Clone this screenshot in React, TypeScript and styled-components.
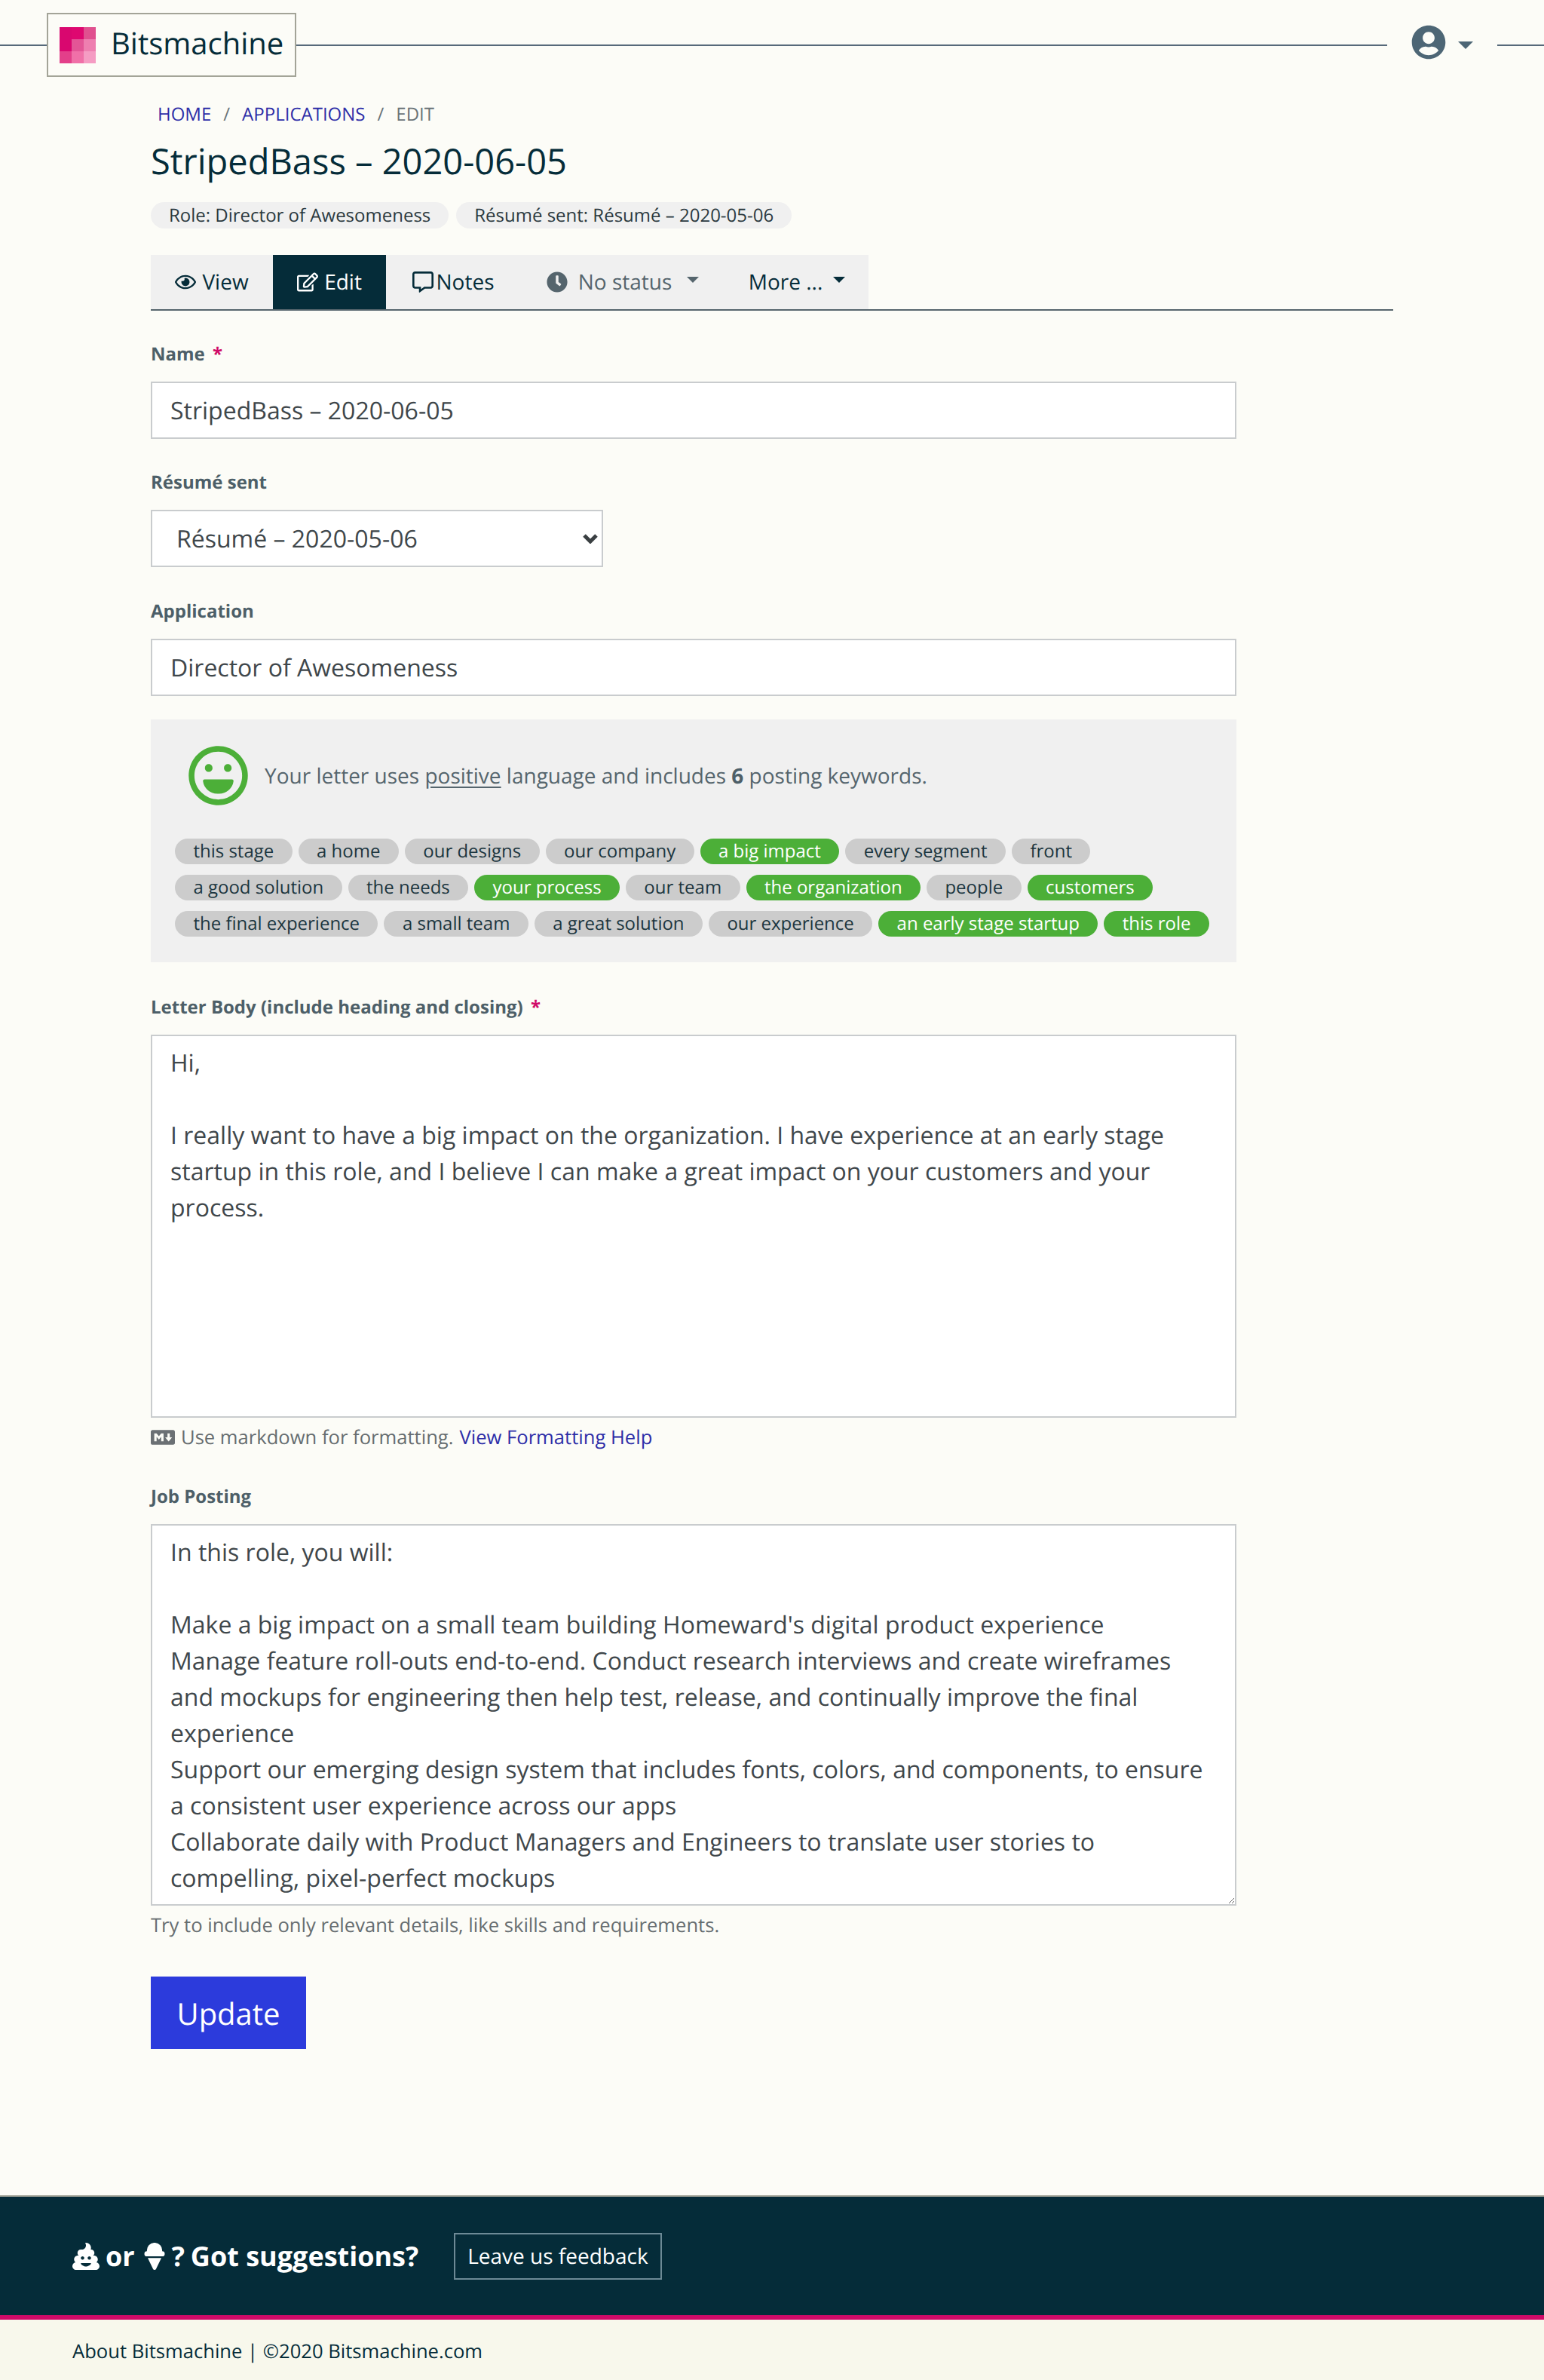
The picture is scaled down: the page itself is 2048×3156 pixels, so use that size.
import React from 'react';
import styled, { createGlobalStyle } from 'styled-components';
import { FaRegEye, FaRegEdit, FaRegCommentAlt, FaClock, FaUserCircle, FaPoo, FaIceCream, FaMarkdown, FaRegLaugh } from 'react-icons/fa';

const GlobalStyle = createGlobalStyle`
  html, body { margin: 0; padding: 0; background: #fcfcf7; }
  body { font-family: "Open Sans", "Noto Sans", sans-serif; color: #052c39; }
  * { box-sizing: border-box; text-rendering: geometricPrecision; }
`;

const Page = styled.div`
  display: flex;
  flex-direction: column;
  width: 2048px;
  height: 3156px;
`;

const Header = styled.header`
  display: flex;
  align-items: center;
  height: 119px;
`;

const Rule = styled.div<{ $w?: number }>`
  height: 2px;
  background: #56697a;
  flex: ${p => (p.$w ? `0 0 ${p.$w}px` : '1')};
`;

const LogoBox = styled.a`
  display: flex;
  align-items: center;
  gap: 20px;
  width: 331px;
  height: 85px;
  padding-left: 15px;
  border: 2px solid #a3a498;
  font-size: 40px;
  color: #052c39;
  span { margin-top: -6px; }
`;

const UserMenu = styled.div`
  display: flex;
  align-items: center;
  gap: 16px;
  width: 146px;
  padding-left: 32px;
  color: #4d6675;
  svg { width: 46px; height: 46px; margin-top: -8px; }
`;

const Caret = styled.span<{ $size?: number }>`
  display: inline-block;
  width: 0;
  height: 0;
  border-left: ${p => p.$size || 8}px solid transparent;
  border-right: ${p => p.$size || 8}px solid transparent;
  border-top: ${p => p.$size || 8}px solid currentColor;
`;

const Main = styled.main`
  flex: 1;
  width: 1648px;
  margin-left: 200px;
`;

const Crumbs = styled.nav`
  display: flex;
  gap: 16px;
  padding-left: 9px;
  margin-top: 17px;
  font-size: 24px;
  line-height: 32px;
  text-transform: uppercase;
  color: #6b7478;
`;

const Crumb = styled.a`
  color: #2e2ea8;
`;

const Title = styled.h1`
  margin: 13px 0 0;
  font-size: 47px;
  font-weight: 400;
  line-height: 64px;
  color: #052c39;
`;

const Tags = styled.div`
  display: flex;
  gap: 10px;
  margin-top: 23px;
`;

const Tag = styled.span`
  padding: 0 24px;
  height: 35px;
  line-height: 35px;
  border-radius: 18px;
  background: #f0f0f0;
  font-size: 24px;
  color: #2c3a40;
`;

const Tabs = styled.div`
  display: flex;
  margin-top: 35px;
  border-bottom: 2px solid #56656d;
`;

const TabBar = styled.div`
  display: flex;
  background: #f0f0f0;
`;

const Tab = styled.a<{ $active?: boolean; $muted?: boolean; $w: number; $gap?: number }>`
  display: flex;
  align-items: center;
  justify-content: center;
  gap: ${p => p.$gap || 8}px;
  width: ${p => p.$w}px;
  height: 72px;
  font-size: 28px;
  background: ${p => (p.$active ? '#052c39' : 'transparent')};
  color: ${p => (p.$active ? '#fff' : p.$muted ? '#55656d' : '#052c39')};
  svg { width: 28px; height: 28px; }
  ${Caret} { margin: 0 0 6px 6px; }
`;

const Form = styled.form`
  width: 1440px;
`;

const Field = styled.div<{ $top: number }>`
  margin-top: ${p => p.$top}px;
`;

const Label = styled.label`
  display: block;
  font-size: 24px;
  font-weight: 700;
  line-height: 36px;
  margin-bottom: 18px;
  color: #4d5f68;
  i { font-style: normal; color: #d00a68; margin-left: 4px; }
`;

const Input = styled.input`
  display: block;
  width: 100%;
  height: 76px;
  padding: 0 24px;
  border: 2px solid #c9ccce;
  background: #fff;
  font: 400 32px "Open Sans", sans-serif;
  color: #3f474b;
  border-radius: 0;
  outline: none;
`;

const SelectWrap = styled.div`
  position: relative;
  width: 600px;
  svg { position: absolute; right: 7px; top: 31px; pointer-events: none; }
`;

const Select = styled.select`
  display: block;
  width: 100%;
  height: 76px;
  padding: 0 32px;
  border: 2px solid #c9ccce;
  background: #fff;
  font: 400 32px "Open Sans", sans-serif;
  color: #3f474b;
  border-radius: 0;
  outline: none;
  appearance: none;
`;

const Sentiment = styled.section`
  margin-top: 31px;
  height: 322px;
  padding: 34px 32px 0;
  background: #f0f0f0;
`;

const SentimentRow = styled.div`
  display: flex;
  align-items: center;
  gap: 21px;
  padding-left: 17px;
  height: 81px;
  font-size: 28px;
  color: #55656d;
  svg { width: 81px; height: 81px; color: #4caf38; }
  u { text-underline-offset: 4px; }
  b { color: #4d5f68; }
`;

const Keywords = styled.div`
  display: flex;
  flex-direction: column;
  gap: 14px;
  margin-top: 43px;
`;

const KeywordRow = styled.div`
  display: flex;
  gap: 8px;
`;

const Keyword = styled.span<{ $on?: boolean }>`
  height: 34px;
  line-height: 34px;
  padding: 0 24.4px;
  border-radius: 17px;
  font-size: 24px;
  white-space: nowrap;
  background: ${p => (p.$on ? '#4caf38' : '#cccccc')};
  color: ${p => (p.$on ? '#fff' : '#1c3640')};
`;

const TextArea = styled.textarea<{ $resize?: boolean }>`
  display: block;
  width: 100%;
  height: ${p => (p.$resize ? 506 : 508)}px;
  padding: 12px 24px;
  border: 2px solid #c9ccce;
  background: #fff;
  font: 400 32px/48px "Open Sans", sans-serif;
  color: #3f474b;
  border-radius: 0;
  outline: none;
  overflow: hidden;
  resize: ${p => (p.$resize ? 'vertical' : 'none')};
`;

const Help = styled.p`
  display: flex;
  align-items: center;
  gap: 8px;
  margin: 8px 0 0;
  font-size: 25.6px;
  line-height: 36px;
  color: #666d70;
  svg { width: 32px; height: 32px; color: #6b7074; }
  a { color: #2e2ea8; }
`;

const Submit = styled.button`
  display: block;
  width: 206px;
  height: 96px;
  margin-top: 50px;
  border: 0;
  border-radius: 0;
  background: #2c3bdc;
  color: #fff;
  font: 400 40px "Open Sans", sans-serif;
`;

const FeedbackBar = styled.section`
  display: flex;
  align-items: center;
  gap: 47px;
  height: 159px;
  padding-left: 96px;
  background: #052c39;
  border-top: 2px solid #a3a498;
  color: #fff;
`;

const FeedbackLead = styled.div`
  display: flex;
  align-items: center;
  gap: 8px;
  font-size: 36px;
  font-weight: 700;
  svg { width: 36px; height: 36px; }
`;

const Cone = styled(FaIceCream)`
  margin-right: -3px;
`;

const FeedbackButton = styled.a`
  padding: 0 16px;
  height: 62px;
  line-height: 58px;
  border: 2px solid #6d8a96;
  font-size: 28px;
  color: #fff;
`;

const Footer = styled.footer`
  height: 86px;
  padding: 24px 0 0 96px;
  border-top: 6px solid #d00a68;
  background: #f8f8ec;
  font-size: 25.6px;
  line-height: 36px;
  color: #052c39;
`;

const Logo = () => (
  <svg width="48" height="48" viewBox="0 0 3 3" shapeRendering="crispEdges">
    <rect x="0" y="0" width="1" height="1" fill="#d9076f" />
    <rect x="1" y="0" width="1" height="1" fill="#de0870" />
    <rect x="2" y="0" width="1" height="1" fill="#e0508f" />
    <rect x="0" y="1" width="1" height="1" fill="#d9076f" />
    <rect x="1" y="1" width="1" height="1" fill="#e35596" />
    <rect x="2" y="1" width="1" height="1" fill="#ee7fb0" />
    <rect x="0" y="2" width="1" height="1" fill="#e33f8a" />
    <rect x="1" y="2" width="1" height="1" fill="#f070a8" />
    <rect x="2" y="2" width="1" height="1" fill="#f59cc3" />
  </svg>
);

const Chevron = () => (
  <svg width="20" height="14" viewBox="0 0 20 14" fill="none" stroke="#3a3f42" strokeWidth="5">
    <path d="M2 3l8 8 8-8" />
  </svg>
);

const keywordRows: [string, boolean][][] = [
  [['this stage', false], ['a home', false], ['our designs', false], ['our company', false], ['a big impact', true], ['every segment', false], ['front', false]],
  [['a good solution', false], ['the needs', false], ['your process', true], ['our team', false], ['the organization', true], ['people', false], ['customers', true]],
  [['the final experience', false], ['a small team', false], ['a great solution', false], ['our experience', false], ['an early stage startup', true], ['this role', true]],
];

const letterBody = `Hi,

I really want to have a big impact on the organization. I have experience at an early stage startup in this role, and I believe I can make a great impact on your customers and your process.`;

const jobPosting = `In this role, you will:

Make a big impact on a small team building Homeward's digital product experience
Manage feature roll-outs end-to-end. Conduct research interviews and create wireframes and mockups for engineering then help test, release, and continually improve the final experience
Support our emerging design system that includes fonts, colors, and components, to ensure a consistent user experience across our apps
Collaborate daily with Product Managers and Engineers to translate user stories to compelling, pixel-perfect mockups
Work with other designers to build and refine the look and feel of all our products and`;

export default function App() {
  return (
    <Page>
      <GlobalStyle />
      <Header>
        <Rule $w={62} />
        <LogoBox>
          <Logo />
          <span>Bitsmachine</span>
        </LogoBox>
        <Rule />
        <UserMenu>
          <FaUserCircle />
          <Caret $size={10} />
        </UserMenu>
        <Rule $w={62} />
      </Header>
      <Main>
        <Crumbs>
          <Crumb>Home</Crumb>
          <span>/</span>
          <Crumb>Applications</Crumb>
          <span>/</span>
          <span>Edit</span>
        </Crumbs>
        <Title>StripedBass – 2020-06-05</Title>
        <Tags>
          <Tag>Role: Director of Awesomeness</Tag>
          <Tag>Résumé sent: Résumé – 2020-05-06</Tag>
        </Tags>
        <Tabs>
          <TabBar>
            <Tab $w={162}><FaRegEye /> View</Tab>
            <Tab $w={150} $active><FaRegEdit /> Edit</Tab>
            <Tab $w={178} $gap={4}><FaRegCommentAlt /> Notes</Tab>
            <Tab $w={272} $muted $gap={14}><FaClock /> No status <Caret /></Tab>
            <Tab $w={190}>More ... <Caret /></Tab>
          </TabBar>
        </Tabs>
        <Form>
          <Field $top={40}>
            <Label>Name <i>*</i></Label>
            <Input defaultValue="StripedBass – 2020-06-05" />
          </Field>
          <Field $top={40}>
            <Label>Résumé sent</Label>
            <SelectWrap>
              <Select defaultValue="r">
                <option value="r">Résumé – 2020-05-06</option>
              </Select>
              <Chevron />
            </SelectWrap>
          </Field>
          <Field $top={41}>
            <Label>Application</Label>
            <Input defaultValue="Director of Awesomeness" />
          </Field>
          <Sentiment>
            <SentimentRow>
              <FaRegLaugh />
              <span>Your letter uses <u>positive</u> language and includes <b>6</b> posting keywords.</span>
            </SentimentRow>
            <Keywords>
              {keywordRows.map((row, i) => (
                <KeywordRow key={i}>
                  {row.map(([word, on]) => (
                    <Keyword key={word} $on={on}>{word}</Keyword>
                  ))}
                </KeywordRow>
              ))}
            </Keywords>
          </Sentiment>
          <Field $top={42}>
            <Label>Letter Body (include heading and closing) <i>*</i></Label>
            <TextArea defaultValue={letterBody} />
            <Help><FaMarkdown /> Use markdown for formatting. <a>View Formatting Help</a></Help>
          </Field>
          <Field $top={43}>
            <Label>Job Posting</Label>
            <TextArea $resize defaultValue={jobPosting} />
            <Help>Try to include only relevant details, like skills and requirements.</Help>
          </Field>
          <Submit type="button">Update</Submit>
        </Form>
      </Main>
      <FeedbackBar>
        <FeedbackLead>
          <FaPoo /> or <Cone /> <span>?</span> <span>Got suggestions?</span>
        </FeedbackLead>
        <FeedbackButton>Leave us feedback</FeedbackButton>
      </FeedbackBar>
      <Footer>About Bitsmachine | ©2020 Bitsmachine.com</Footer>
    </Page>
  );
}
